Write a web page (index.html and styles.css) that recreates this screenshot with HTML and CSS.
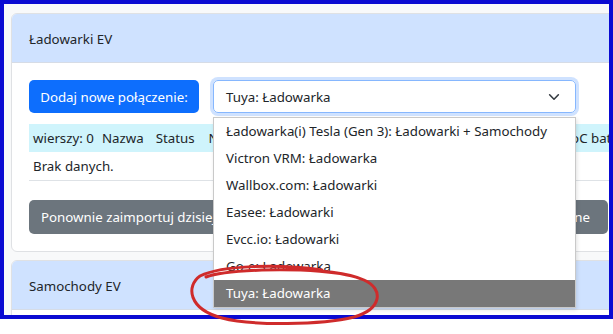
FILE: index.html
```html
<!DOCTYPE html>
<html lang="pl">
<head>
  <meta charset="UTF-8">
  <meta name="viewport" content="width=device-width, initial-scale=1.0">
  <title>Ładowarki EV</title>
  <link rel="stylesheet" href="styles.css">
</head>
<body>
  <div class="shot">
    <div class="frame">
      <div class="page">
        <section class="card">
          <div class="card-header">Ładowarki EV</div>
          <div class="card-body">
            <div class="toolbar">
              <button class="btn btn-primary">Dodaj nowe połączenie:</button>
              <div class="select-wrap">
                <div class="select">
                  <span>Tuya: Ładowarka</span>
                  <svg class="chevron" viewBox="0 0 16 16" width="16" height="16">
                    <path d="M3 5.5l5 5 5-5" fill="none" stroke="#343a40" stroke-width="1.8" stroke-linecap="round" stroke-linejoin="round"/>
                  </svg>
                </div>
                <ul class="dropdown">
                  <li>Ładowarka(i) Tesla (Gen 3): Ładowarki + Samochody</li>
                  <li>Victron VRM: Ładowarka</li>
                  <li>Wallbox.com: Ładowarki</li>
                  <li>Easee: Ładowarki</li>
                  <li>Evcc.io: Ładowarki</li>
                  <li>Go-e: Ładowarka</li>
                  <li class="selected">Tuya: Ładowarka</li>
                </ul>
              </div>
            </div>

            <table class="grid">
              <thead>
                <tr>
                  <th class="c-rows">wierszy: 0</th>
                  <th class="c-name">Nazwa</th>
                  <th class="c-status">Status</th>
                  <th class="c-fill">Nieaktywny od</th>
                  <th class="c-soc">SoC baterii</th>
                </tr>
              </thead>
              <tbody>
                <tr>
                  <td colspan="5">Brak danych.</td>
                </tr>
              </tbody>
            </table>

            <button class="btn btn-secondary wide">
              <span>Ponownie zaimportuj dzisiejsze dane</span>
              <span>Usuń dane</span>
            </button>
          </div>
        </section>

        <section class="card">
          <div class="card-header">Samochody EV</div>
          <div class="card-body"></div>
        </section>
      </div>
    </div>

    <svg class="scribble" viewBox="0 0 613 334" width="613" height="334">
      <path d="M322 270 C 280 264, 222 265, 200 276 C 186 286, 188 309, 222 318 C 252 326, 322 325, 354 317 C 382 309, 384 289, 364 280 C 344 271, 300 269, 262 270 C 238 271, 216 273, 206 277" fill="none" stroke="#cf2b2b" stroke-width="3" stroke-linecap="round"/>
    </svg>
  </div>
</body>
</html>
```

FILE: styles.css
```css
body {
  margin: 0;
  padding: 0;
  background-color: #fff;
  font-family: "Noto Sans", sans-serif;
  color: #212529;
}

.shot {
  position: relative;
  width: 613px;
  height: 334px;
}

.frame {
  width: 613px;
  height: 319px;
  box-sizing: border-box;
  border: 4px solid #0a0ad2;
  overflow: hidden;
  background-color: #f8f9fa;
}

.page {
  padding: 9px 0 0 7px;
}

.card {
  width: 615px;
  background-color: #fff;
  border: 1px solid #dfe1e4;
  border-radius: 6px;
  margin-bottom: 8px;
}

.card-header {
  height: 49px;
  display: flex;
  align-items: center;
  padding: 2px 17px 0;
  box-sizing: border-box;
  background-color: #cfe2ff;
  border-bottom: 1px solid #d6dce6;
  border-radius: 5px 5px 0 0;
  font-size: 13.3px;
}

.card-body {
  padding: 17px;
}

.toolbar {
  display: flex;
  gap: 14px;
  margin-bottom: 11px;
}

.btn {
  height: 33px;
  border: none;
  border-radius: 5px;
  padding: 0 12px;
  font-family: inherit;
  font-size: 13.3px;
  color: #fff;
}

.btn-primary {
  width: 170px;
  padding: 0;
  background-color: #0d6efd;
}

.btn-secondary {
  background-color: #6c757d;
}

.wide {
  width: 579px;
  height: 34px;
  display: flex;
  align-items: center;
  justify-content: space-between;
  padding: 0 18px 0 12px;
  margin-top: 19px;
}

.select-wrap {
  position: relative;
  width: 363px;
}

.select {
  height: 33px;
  box-sizing: border-box;
  display: flex;
  align-items: center;
  justify-content: space-between;
  padding: 0 12px;
  border: 1px solid #86b7fe;
  border-radius: 5px;
  box-shadow: 0 0 0 3px rgba(13, 110, 253, 0.2);
  font-size: 13.3px;
}

.chevron {
  width: 14px;
  height: 14px;
  margin-right: 2px;
}

.dropdown {
  position: absolute;
  top: 37px;
  left: 0;
  width: 363px;
  box-sizing: border-box;
  margin: 0;
  padding: 0;
  list-style: none;
  background-color: #fff;
  border: 1px solid #c9c9c9;
  box-shadow: 1px 2px 4px rgba(0, 0, 0, 0.12);
  z-index: 5;
}

.dropdown li {
  height: 27px;
  line-height: 27px;
  padding: 0 12px;
  font-size: 13.3px;
  white-space: nowrap;
}

.dropdown li.selected {
  background-color: #787878;
  color: #fff;
}

.grid {
  width: 630px;
  border-collapse: collapse;
  font-size: 13.3px;
}

.grid th {
  height: 28px;
  padding: 0 4px;
  font-weight: normal;
  text-align: left;
  white-space: nowrap;
  background-color: #cff4fc;
}

.grid th.c-rows {
  width: 51px;
}

.grid th.c-name {
  width: 46px;
}

.grid th.c-status {
  width: 45px;
}

.grid th.c-fill {
  width: 356px;
}

.grid th.c-soc {
  width: 92px;
}

.grid td {
  height: 28px;
  padding: 0 4px;
  border-bottom: 1px solid #dee2e6;
}

.scribble {
  position: absolute;
  top: 0;
  left: 0;
  z-index: 10;
  pointer-events: none;
}
```
